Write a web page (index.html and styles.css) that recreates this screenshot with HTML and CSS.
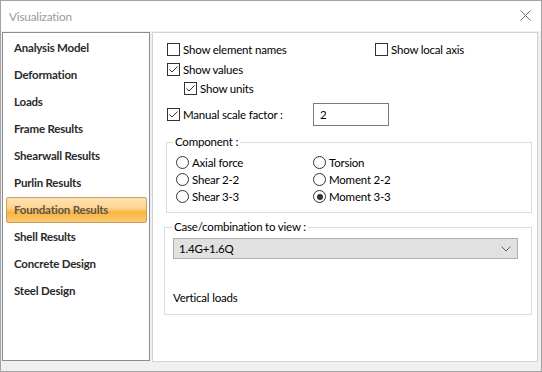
FILE: index.html
```html
<!DOCTYPE html>
<html lang="en">
<head>
    <meta charset="UTF-8">
    <title>Visualization</title>
    <link rel="stylesheet" href="styles.css">
</head>
<body>
    <div class="window">
        <div class="titlebar">
            <span class="title">Visualization</span>
            <svg class="close" width="11" height="11" viewBox="0 0 11 11">
                <path d="M0.5 0.5 L10.5 10.5 M10.5 0.5 L0.5 10.5" stroke="#707070" stroke-width="1" fill="none"/>
            </svg>
        </div>
        <div class="content">
            <ul class="nav">
                <li>Analysis Model</li>
                <li>Deformation</li>
                <li>Loads</li>
                <li>Frame Results</li>
                <li>Shearwall Results</li>
                <li>Purlin Results</li>
                <li class="active">Foundation Results</li>
                <li>Shell Results</li>
                <li>Concrete Design</li>
                <li>Steel Design</li>
            </ul>
            <div class="panel">
                <div class="row row-top">
                    <label class="check"><span class="box"></span>Show element names</label>
                    <label class="check"><span class="box"></span>Show local axis</label>
                </div>
                <div class="row">
                    <label class="check"><span class="box checked"><svg width="11" height="11" viewBox="0 0 11 11"><path d="M1.5 5.5 L4 8 L9.5 2.5" stroke="#333" stroke-width="1" fill="none"/></svg></span>Show values</label>
                </div>
                <div class="row indent">
                    <label class="check"><span class="box checked"><svg width="11" height="11" viewBox="0 0 11 11"><path d="M1.5 5.5 L4 8 L9.5 2.5" stroke="#333" stroke-width="1" fill="none"/></svg></span>Show units</label>
                </div>
                <div class="row row-scale">
                    <label class="check"><span class="box checked"><svg width="11" height="11" viewBox="0 0 11 11"><path d="M1.5 5.5 L4 8 L9.5 2.5" stroke="#333" stroke-width="1" fill="none"/></svg></span>Manual scale factor :</label>
                    <div class="textbox">2</div>
                </div>

                <fieldset class="group group-component">
                    <legend>Component :</legend>
                    <div class="radios">
                        <label class="radio"><span class="dot"></span>Axial force</label>
                        <label class="radio"><span class="dot"></span>Torsion</label>
                        <label class="radio"><span class="dot"></span>Shear 2-2</label>
                        <label class="radio"><span class="dot"></span>Moment 2-2</label>
                        <label class="radio"><span class="dot"></span>Shear 3-3</label>
                        <label class="radio"><span class="dot on"></span>Moment 3-3</label>
                    </div>
                </fieldset>

                <fieldset class="group group-case">
                    <legend>Case/combination to view :</legend>
                    <div class="combo">
                        <span>1.4G+1.6Q</span>
                        <svg width="10" height="6" viewBox="0 0 10 6">
                            <path d="M0.5 0.5 L5 5 L9.5 0.5" stroke="#606060" stroke-width="1" fill="none"/>
                        </svg>
                    </div>
                    <div class="case-note">Vertical loads</div>
                </fieldset>
            </div>
        </div>
    </div>
</body>
</html>
```

FILE: styles.css
```css
body {
    margin: 0;
    font-family: 'Lato', 'Liberation Sans', sans-serif;
    font-size: 11.5px;
    letter-spacing: -0.2px;
    color: #000000;
}

.window {
    width: 542px;
    height: 372px;
    box-sizing: border-box;
    border: 1px solid #a3a3a3;
    background: #f0f0f0;
    display: flex;
    flex-direction: column;
}

.titlebar {
    height: 30px;
    background: #ffffff;
    display: flex;
    align-items: center;
    justify-content: space-between;
    padding: 0 10px 0 8px;
    flex-shrink: 0;
}

.title {
    color: #9a9a9a;
    font-size: 11.8px;
    margin-top: 1px;
}

.close {
    display: block;
    margin-top: -1px;
}

.content {
    display: flex;
    gap: 2px;
    padding: 1px 3px 0 1px;
    background: #f0f0f0;
}

/* left navigation list */
.nav {
    list-style: none;
    margin: 0;
    padding: 2px 0 0 0;
    width: 148px;
    height: 329px;
    box-sizing: border-box;
    border: 1px solid #8a8d94;
    background: #ffffff;
}

.nav li {
    height: 24px;
    line-height: 24px;
    border: 1px solid transparent;
    margin: 0 2px 1px 3px;
    padding-left: 7px;
    font-weight: 700;
    color: #2a2a2a;
    border-radius: 2px;
}

.nav li.active {
    border-color: #c9a15c;
    background: linear-gradient(to bottom, #fee3b2 0%, #fdd595 40%, #f9b543 60%, #fbca72 100%);
    color: #5d5449;
}

/* right options panel */
.panel {
    width: 386px;
    height: 330px;
    box-sizing: border-box;
    border: 1px solid #d2d2d2;
    background: #ffffff;
    padding: 7px 5px 0 13px;
}

.row {
    display: flex;
    align-items: center;
    height: 19px;
}

.row-top {
    height: 19px;
    margin-bottom: 1px;
}

.row-top .check:first-child {
    width: 207px;
}

.indent {
    padding-left: 17px;
}

.row-scale {
    height: 23px;
    margin-top: 5px;
}

.row-scale .check {
    width: 146px;
}

.check {
    display: flex;
    align-items: center;
    margin-left: 1px;
}

.box {
    width: 11px;
    height: 11px;
    border: 1px solid #333333;
    background: #ffffff;
    margin-right: 3px;
    display: flex;
}

.box svg {
    display: block;
}

.textbox {
    width: 76px;
    height: 23px;
    box-sizing: border-box;
    border: 1px solid #7a7a7a;
    padding-left: 6px;
    line-height: 21px;
}

.group {
    border: 1px solid #dcdcdc;
    margin: 0;
    min-width: 0;
}

.group legend {
    padding: 0 2px;
    line-height: 16px;
}

.group-component {
    margin-top: 8px;
    padding: 4px 0 7px 7px;
}

.group-component legend {
    margin-left: -1px;
}

.radios {
    display: grid;
    grid-template-columns: 137px 1fr;
    grid-auto-rows: 17px;
    padding-left: 2px;
}

.radio {
    display: flex;
    align-items: center;
}

.dot {
    width: 11px;
    height: 11px;
    border: 1px solid #333333;
    border-radius: 50%;
    margin-right: 3px;
    position: relative;
}

.dot.on::after {
    content: "";
    position: absolute;
    left: 2.5px;
    top: 2.5px;
    width: 6px;
    height: 6px;
    border-radius: 50%;
    background: #333333;
}

.group-case {
    margin: 6px 0 0 -2px;
    padding: 3px 13px 8px 7px;
}

.combo {
    display: flex;
    align-items: center;
    justify-content: space-between;
    height: 21px;
    box-sizing: border-box;
    border: 1px solid #adadad;
    background: #e1e1e1;
    padding: 0 6px 0 5px;
    margin-left: 1px;
}

.combo svg {
    display: block;
}

.case-note {
    margin-top: 31px;
    line-height: 16px;
    padding-left: 1px;
}
```
